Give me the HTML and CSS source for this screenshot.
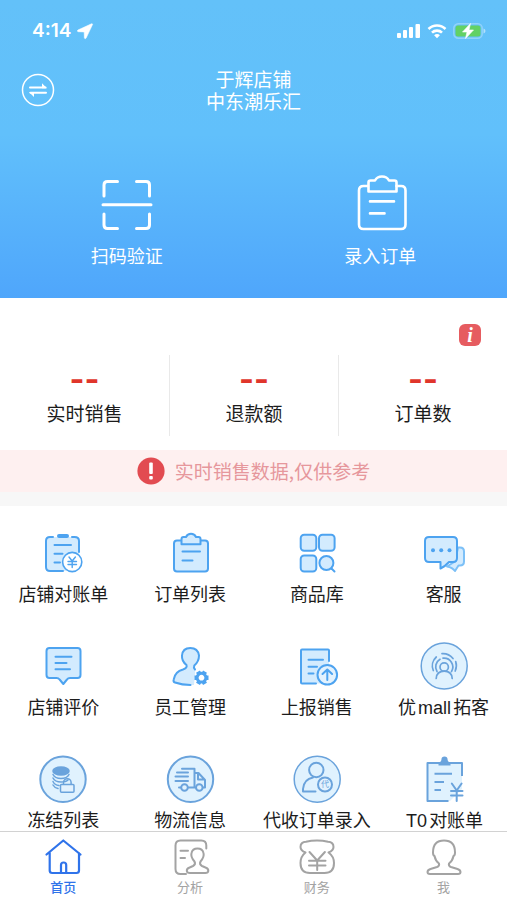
FILE: index.html
```html
<!DOCTYPE html>
<html lang="zh-CN">
<head>
<meta charset="utf-8">
<meta name="viewport" content="width=device-width, initial-scale=1">
<title>于辉店铺</title>
<link rel="stylesheet" href="styles.css">
</head>
<body>
<div class="app">
  <header class="hero">
    <div class="status">
      <div class="status-side">
        <span class="clock">4:14</span>
        <svg width="16" height="16" viewBox="0 0 16 16" aria-hidden="true"><path d="M14.600.8 1 7c-.9.500-.7 1.600.3 1.700l5.900.2.200 5.800c.1 1.100 1.300 1.200 1.700.3L15.500 1.600c.200-.6-.3-1-.9-.8z" fill="#fff" stroke="#fff" stroke-width=".6"/></svg>
      </div>
      <div class="status-side">
        <svg width="24" height="16" viewBox="0 0 24 16" fill="#fff" aria-hidden="true"><rect x="0" y="10" width="4" height="5" rx="1"/><rect x="6" y="7" width="4" height="8" rx="1"/><rect x="12" y="4" width="4" height="11" rx="1"/><rect x="18.500" y="1" width="4.500" height="14" rx="1"/></svg>
        <svg width="20" height="16" viewBox="0 0 20 16" fill="none" stroke="#fff" stroke-width="2.600" aria-hidden="true"><path d="M1.500 6a12 12 0 0 1 17 0M5 9.700a7 7 0 0 1 10 0"/><path d="M10 15.200 7.100 12.300a4 4 0 0 1 5.800 0z" fill="#fff" stroke="none"/></svg>
        <svg width="33" height="16" viewBox="0 0 33 16" aria-hidden="true"><rect x=".8" y=".8" width="28.400" height="14.400" rx="4.500" fill="none" stroke="#fff" stroke-opacity=".3" stroke-width="1.500"/><rect x="2.500" y="2.500" width="25" height="11" rx="2.500" fill="#62d165"/><path d="M30.500 5.500c2.600.8 2.600 4.200 0 5z" fill="#fff" fill-opacity=".5"/><path d="M17.500.5 9.500 9h4.500l-1.500 6.500L20.500 7H16z" fill="#fff" stroke="#fff" stroke-width=".6"/></svg>
      </div>
    </div>
    <div class="titlebar">
      <button class="switch" type="button" aria-label="切换店铺">
        <svg width="34" height="34" viewBox="0 0 34 34" fill="none" stroke="#fff" aria-hidden="true"><circle cx="17" cy="17" r="15.500" stroke-width="1.500"/><path d="M9 14.500h15.500M25 19.700H9.500" stroke-width="2" stroke-linecap="round"/><path d="M21 10.200l5 5h-5zM13 24l-5-5h5z" fill="#fff" stroke="none"/></svg>
      </button>
      <h1 class="title">于辉店铺<br>中东潮乐汇</h1>
    </div>
    <nav class="actions">
      <a class="action" href="#scan">
        <svg width="56" height="56" viewBox="0 0 56 56" fill="none" stroke="#fff" stroke-width="3" stroke-linecap="round" aria-hidden="true"><path d="M5 19V8q0-3.500 3.500-3.500H18.500M37.500 4.500H47q3.500 0 3.500 3.500V19M5 37V48q0 3.500 3.500 3.500H18.500M37.500 51.500H47q3.500 0 3.500-3.500V37M4 27.800H52"/></svg>
        <span>扫码验证</span>
      </a>
      <a class="action" href="#order">
        <svg width="56" height="56" viewBox="0 0 56 56" fill="none" stroke="#fff" stroke-width="2.600" stroke-linecap="round" stroke-linejoin="round" aria-hidden="true"><path d="M16 9H11.500Q7 9 7 13.500V47.500Q7 52 11.500 52H49Q53.500 52 53.500 47.500V13.500Q53.500 9 49 9H44.500"/><path d="M16.500 14.500V5.500Q16.500 3.500 18.500 3.500H23Q25-.5 30-.5T37 3.500H42.500Q44.500 3.500 44.500 5.500V14.500z"/><path d="M18 24.400H42M18 36.400H32.500"/></svg>
        <span>录入订单</span>
      </a>
    </nav>
  </header>

  <main class="content">
    <section class="summary">
      <div class="summary-head">
        <button class="info" type="button" aria-label="说明">i</button>
      </div>
      <dl class="stats">
        <div class="stat"><dt>实时销售</dt><dd>--</dd></div>
        <div class="stat"><dt>退款额</dt><dd>--</dd></div>
        <div class="stat"><dt>订单数</dt><dd>--</dd></div>
      </dl>
    </section>

    <p class="notice">
      <svg width="28" height="28" viewBox="0 0 28 28" aria-hidden="true"><circle cx="14" cy="14" r="13.600" fill="#e24b51"/><rect x="12.200" y="5.500" width="3.600" height="11.500" rx="1" fill="#fff"/><rect x="12.200" y="19" width="3.600" height="3.600" rx="1" fill="#fff"/></svg>
      <span>实时销售数据,仅供参考</span>
    </p>

    <nav class="grid">
      <a class="item" href="#bill">
        <svg class="icon" viewBox="0 0 48 48" aria-hidden="true"><rect x="7" y="8" width="33" height="34" rx="4" class="tint"/><path d="M14 8h-3Q7 8 7 12v26q0 4 4 4h13M33 8h2.500Q40 8 40 12v11M15.500 16H32M15.500 24.700h8M15.500 33.500h5.500"/><path d="M20 7h8" stroke-width="4"/><circle cx="33.200" cy="33" r="9.600" fill="#fff" stroke-width="1.600"/><path d="M30 28l3.200 4 3.200-4M29 32.500h8.500M29 35.500h8.500M33.200 32v6.500" stroke-width="1.400"/></svg>
        <span>店铺对账单</span>
      </a>
      <a class="item" href="#orders">
        <svg class="icon" viewBox="0 0 48 48" aria-hidden="true"><rect x="8" y="11.500" width="34" height="31" rx="3" class="fill"/><path d="M15.500 15.200V10q0-2 2-2h2.500q1.500-3.200 5-3.200T30 8h2.500q2 0 2 2v5.200z" class="fill"/><path d="M16.500 22.500H34M16.500 31.500H26.500"/></svg>
        <span>订单列表</span>
      </a>
      <a class="item" href="#goods">
        <svg class="icon" viewBox="0 0 48 48" aria-hidden="true"><rect x="7.700" y="5.700" width="15.600" height="16" rx="3.500" class="fill"/><rect x="26" y="5.700" width="15.600" height="16" rx="3.500" class="fill"/><rect x="7.700" y="26.500" width="15.600" height="16" rx="3.500" class="fill"/><circle cx="33.400" cy="34" r="7" class="fill"/><path d="M38.500 39.500l3 3"/></svg>
        <span>商品库</span>
      </a>
      <a class="item" href="#service">
        <svg class="icon" viewBox="0 0 48 48" aria-hidden="true"><path d="M38 18.500h2q4 0 4 4v10q0 4-4 4h-1.500l-3.500 5.500q-2.500-3.500-8-4.500l8-5z" class="fill pale"/><path d="M9 8h24q4 0 4 4v17q0 4-4 4h-4q-3.500 4-8.500 6.500V33H9q-4 0-4-4V12q0-4 4-4z" class="fill"/><g fill="#4da3f0" stroke="none"><circle cx="13" cy="21.300" r="2"/><circle cx="21.200" cy="21.300" r="2"/><circle cx="29.500" cy="21.300" r="2"/></g></svg>
        <span>客服</span>
      </a>
      <a class="item" href="#review">
        <svg class="icon" viewBox="0 0 48 48" aria-hidden="true"><path d="M10.500 6h28q3 0 3 3v24q0 3-3 3H31q-2 0-3 1.500l-3.700 4.500-3.700-4.500Q19.500 36 17.500 36h-7q-3 0-3-3V9q0-3 3-3z" class="fill"/><path d="M16.500 14.700H32.500M16.500 21H27.500M16.500 27.300H31"/></svg>
        <span>店铺评价</span>
      </a>
      <a class="item" href="#staff">
        <svg class="icon" viewBox="0 0 48 48" aria-hidden="true"><path d="M25 43q-9 0-16-2.500-2-.6-1.300-3Q9 29.500 17 27.500q4.500-1.300 3.500-4.500-5-4-4.500-9.500Q16.700 6 24.300 6T33 13.500q0 6-4.700 10-1.300 2.500 1 4.500L28 43z" class="tint"/><path d="M24.500 43Q16 43 9 40.500q-2-.6-1.300-3Q9 29.500 17 27.500q4.500-1.300 3.500-4.500-5-4-4.500-9.500Q16.700 6 24.300 6T33 13.500q0 6-4.700 10-1 2 .7 4"/><g transform="translate(35.500 35.700)"><path d="M-7 0h14M-3.500-6.100l7 12.200M3.500-6.100l-7 12.200" stroke-width="4.500" stroke-linecap="butt"/><circle r="4.400" fill="#fff" stroke-width="3"/></g></svg>
        <span>员工管理</span>
      </a>
      <a class="item" href="#report">
        <svg class="icon" viewBox="0 0 48 48" aria-hidden="true"><rect x="8" y="7.500" width="28" height="34" rx="1" class="tint"/><path d="M23 41.500H9q-1 0-1-1V8.500q0-1 1-1h26q1 0 1 1V19M15.500 17.700H30M15.500 24.700h8.500M15.500 31.500h5"/><circle cx="34.300" cy="32.800" r="9.800" fill="#e3f2fe"/><path d="M34.300 38V27.700M29.500 32l4.800-4.500 4.800 4.500"/></svg>
        <span>上报销售</span>
      </a>
      <a class="item" href="#mall">
        <svg class="icon muted" viewBox="0 0 48 48" aria-hidden="true"><circle cx="24.200" cy="24" r="23" class="fill"/><g stroke-width="1.700"><circle cx="24.200" cy="25" r="4.200"/><path d="M16.200 36.500q.5-7.300 8-7.300t8 7.300M17 29.500a8.800 8.800 0 0 1 3-12.200M23 16.200a8.800 8.800 0 0 1 8.500 13.300M13.300 28.500a12 12 0 0 1 3-13.500M22 11.700a13 13 0 0 1 11 4.800M35.700 19.500a13 13 0 0 1-.5 9.500"/></g></svg>
        <span>优<span class="latin">mall</span>拓客</span>
      </a>
      <a class="item" href="#frozen">
        <svg class="icon muted" viewBox="0 0 48 48" aria-hidden="true"><circle cx="24" cy="24.300" r="22.700" class="fill ring"/><ellipse cx="22" cy="16" rx="7.800" ry="3.800" fill="#6aa3dc"/><path d="M14 19.500q2 4 8 4t8-4M14 23q2 4 8 4 5 0 7-2M14 26.500q1.500 3.500 6 4M14 30q1.500 2.800 5 3.500" stroke-width="1.500"/><path d="M24.500 29.500v-2a3.800 3.800 0 0 1 7.600 0v2" stroke-width="1.500"/><rect x="21.500" y="29.500" width="13.500" height="7.800" rx="1" fill="#e3f2fe" stroke-width="1.500"/></svg>
        <span>冻结列表</span>
      </a>
      <a class="item" href="#logistics">
        <svg class="icon muted" viewBox="0 0 48 48" aria-hidden="true"><circle cx="24.500" cy="24.300" r="22.700" class="fill ring"/><path d="M16 13.800h12.500V32M11 17.500h11M9.500 21.500h12.500M9.500 26h12.500M13 32.500h2M22.500 32.500h7M28.500 18h4l6.500 7v7.500h-1.500M32 18v6.500h6.500"/><circle cx="18.500" cy="32.500" r="3.300"/><circle cx="33.300" cy="32.500" r="3.300"/></svg>
        <span>物流信息</span>
      </a>
      <a class="item" href="#proxy">
        <svg class="icon muted" viewBox="0 0 48 48" aria-hidden="true"><circle cx="24.200" cy="24.300" r="23" class="fill"/><circle cx="23.300" cy="15" r="7.200"/><path d="M22.500 36.600H10V34Q11 24 20 22.500"/><circle cx="32" cy="29.500" r="7" fill="#e3f2fe"/><text x="32" y="32.300" class="badge-text">代</text></svg>
        <span>代收订单录入</span>
      </a>
      <a class="item" href="#t0">
        <svg class="icon muted" viewBox="0 0 48 48" aria-hidden="true"><path d="M7.500 8H42v26L30 46H7.500z" class="tint"/><path d="M42 21V8H7.500v38H28.500M14.500 18.700H32M14.500 27h9.500M14.500 35h6.500" stroke-linecap="butt"/><path d="M18.500 10.500V7.500q3-.5 3-3.500 0-2.500 3-2.500t3 2.500q0 3 3 3.500v3z" fill="#6aa3dc" stroke="none"/><path d="M31.800 28.500l4.900 7 4.900-7M31 36h11.500M31 40.500h11.500M36.700 36v10"/></svg>
        <span><span class="latin">T0</span>对账单</span>
      </a>
    </nav>
  </main>

  <nav class="tabs">
    <a class="tab active" href="#home" aria-current="page">
      <svg class="tab-icon" viewBox="0 0 40 40" aria-hidden="true"><path d="M3.500 17.500 20.300 3.500 37.500 17.500M6.700 16V33.500q0 2.500 2.500 2.500H33.500q2.500 0 2.500-2.500V16M18 35.500V28q0-2.500 2.600-2.500T23.200 28v7.500" stroke-width="2.200"/></svg>
      <span>首页</span>
    </a>
    <a class="tab" href="#analysis">
      <svg class="tab-icon" viewBox="0 0 40 40" aria-hidden="true"><path d="M36.300 11.500V8.500q0-5-5-5H10.500q-5 0-5 5V32q0 5 5 5H16M10.500 13.700H18M10.500 21H15"/><path d="M24.500 24.500q-4-4.500-3-8.500 1-4.500 6-4.500t6 4.500q1 4-3 8.500-1.500 3 1.500 4.500l3.500 1.500q3 1.200 2.800 3.500-.2 2-3 2H20q-3 0-3.200-2-.2-2.300 2.800-3.500L23 29q3-1.500 1.500-4.500z"/></svg>
      <span>分析</span>
    </a>
    <a class="tab" href="#finance">
      <svg class="tab-icon" viewBox="0 0 40 40" aria-hidden="true"><path d="M8.500 15.500Q3.500 13.500 3.500 10q0-5 5.500-5.200Q14 3.500 20 3.500t11 1.300q5.500.2 5.500 5.200 0 3.500-5 5.500M8.500 15.500q-5 4-5 10.500Q3.500 36 13 36H27.500Q37 36 37 26q0-6.500-5.500-10.500M12.500 15l7.700 8.500 7.700-8.500M12 23.700H28.500M12 28.500H28.500M20.200 23.700V33"/></svg>
      <span>财务</span>
    </a>
    <a class="tab" href="#me">
      <svg class="tab-icon" viewBox="0 0 40 40" aria-hidden="true"><path d="M15 26.500q-3.500-2.500-4.500-7.500-1.500-.5-1.500-3.500Q9 3.500 20 3.500T31 15.500q0 3-1.500 3.500-1 5-4.500 7.500-.7 2.500 2 3.500l6.500 2q3 1 3 3t-2.500 2H6q-2.500 0-2.500-2t3-3l6.500-2q2.700-1 2-3.500z"/></svg>
      <span>我</span>
    </a>
  </nav>
</div>
</body>
</html>
```
FILE: styles.css
```css
* {
  box-sizing: border-box;
}

body {
  margin: 0;
  background: #fff;
  color: #1c1c1c;
  font-family: "Noto Sans CJK SC", sans-serif;
}

a {
  color: inherit;
  text-decoration: none;
}

button {
  padding: 0;
  border: 0;
  background: none;
}

svg {
  display: block;
  overflow: visible;
}

.app {
  display: flex;
  flex-direction: column;
  min-height: 100vh;
}

/* Header */

.hero {
  padding-bottom: 32px;
  background: linear-gradient(#63c1f9 0%, #61c0fb 45%, #4fa6fb 100%);
  color: #fff;
}

.status {
  display: flex;
  justify-content: space-between;
  padding: 20px 21px 0 32px;
}

.status-side {
  display: flex;
  align-items: center;
  gap: 6px;
  height: 22px;
}

.clock {
  font-family: Inter, sans-serif;
  font-size: 19px;
  font-weight: 600;
  line-height: 22px;
}

.titlebar {
  display: grid;
  grid-template-columns: 34px 1fr 34px;
  align-items: center;
  padding: 26px 21px 0;
}

.switch {
  width: 34px;
  height: 34px;
  cursor: pointer;
}

.title {
  margin: 0;
  font-size: 19px;
  font-weight: 400;
  line-height: 22px;
  text-align: center;
}

.actions {
  display: grid;
  grid-template-columns: 1fr 1fr;
  padding-top: 65px;
}

.action {
  display: flex;
  flex-direction: column;
  align-items: center;
  gap: 11px;
  font-size: 18px;
  line-height: 22px;
}

/* Sales summary */

.summary {
  padding-bottom: 14px;
}

.summary-head {
  display: flex;
  justify-content: flex-end;
  padding: 26px 26px 9px;
}

.info {
  width: 22px;
  height: 22px;
  border-radius: 6px;
  background: #e65c60;
  color: #fff;
  font: italic 700 20px/22px "Liberation Serif", serif;
  text-align: center;
  cursor: pointer;
}

.stats {
  display: grid;
  grid-template-columns: repeat(3, 1fr);
  margin: 0;
}

.stat {
  display: flex;
  flex-direction: column-reverse;
  align-items: center;
  gap: 6px;
  padding: 8px 0 12px;
}

.stat + .stat {
  border-left: 1px solid #e9e9e9;
}

.stat dt {
  font-size: 19px;
  line-height: 22px;
}

.stat dd {
  margin: 0;
  color: #e0352b;
  font-family: Inter, sans-serif;
  font-size: 32px;
  font-weight: 700;
  line-height: 33px;
}

.notice {
  display: flex;
  align-items: center;
  justify-content: center;
  gap: 10px;
  margin: 0;
  padding: 7px 0;
  border-bottom: 14px solid #f7f7f7;
  background: #fef0f0;
  color: #e6979c;
  font-size: 19px;
  line-height: 22px;
}

/* Function grid */

.grid {
  display: grid;
  grid-template-columns: repeat(4, 1fr);
  row-gap: 38px;
  padding: 23px 0 1px;
}

.item {
  display: flex;
  flex-direction: column;
  align-items: center;
  gap: 5px;
  font-size: 18px;
  line-height: 22px;
  white-space: nowrap;
}

.latin {
  margin: 0 2px;
  font-family: "Liberation Sans", sans-serif;
  line-height: 1;
}

.icon {
  width: 48px;
  height: 48px;
  fill: none;
  stroke: #4da3f0;
  stroke-width: 2;
  stroke-linecap: round;
  stroke-linejoin: round;
}

.icon .fill {
  fill: #d3ebfe;
}

.icon .tint {
  fill: #d3ebfe;
  stroke: none;
}

.icon .pale {
  stroke: #7cc0f7;
}

.muted {
  stroke: #6aa3dc;
}

.muted .fill,
.muted .tint {
  fill: #e0f2fe;
}

.muted .fill {
  stroke-width: 1.5;
}

.muted .ring {
  stroke-width: 2;
}

.badge-text {
  fill: #6aa3dc;
  stroke: none;
  font-size: 8px;
  text-anchor: middle;
}

/* Bottom tabs */

.tabs {
  position: sticky;
  bottom: 0;
  display: grid;
  grid-template-columns: repeat(4, 1fr);
  margin-top: auto;
  padding: 5px 0;
  border-top: 1px solid #d2d2d2;
  background: #fff;
}

.tab {
  display: flex;
  flex-direction: column;
  align-items: center;
  gap: 2px;
  color: #a3a3a3;
  font-size: 13px;
  line-height: 16px;
}

.active {
  color: #2f73ea;
  font-weight: 500;
}

.tab-icon {
  width: 40px;
  height: 40px;
  fill: none;
  stroke: currentColor;
  stroke-width: 2;
  stroke-linecap: round;
  stroke-linejoin: round;
}
```
